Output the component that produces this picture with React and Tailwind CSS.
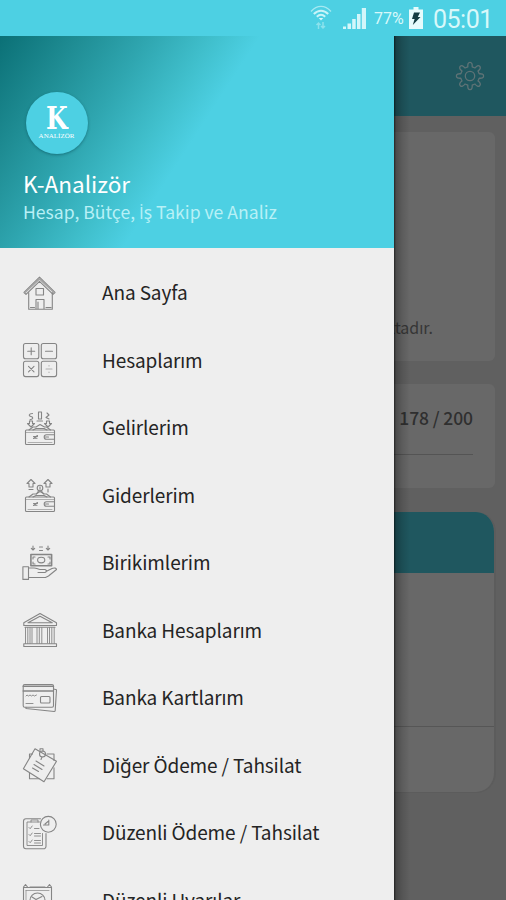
import React from "react";

const sans = "font-['Noto_Sans_CJK_SC','Source_Sans_Pro','Noto_Sans',sans-serif]";

function Icon({ children }) {
  return (
    <svg viewBox="0 0 40 40" className="h-10 w-10 shrink-0" fill="none" stroke="#858585" strokeWidth="1.1" strokeLinejoin="round" strokeLinecap="round">
      {children}
    </svg>
  );
}

const Wallet = () => (
  <>
    <rect x="5.5" y="22" width="29" height="14.5" rx="1" />
    <path d="M5.5 24.5h29M8 34.5h24" strokeWidth=".6" />
    <path d="M34.5 26.7h-8a2 2 0 0 0 0 4.6h8M25.5 29h3M13.5 30.5l4-3M13.5 28.5h4M14 30.2h3" />
    <path d="M9 22l4-3h3l4-2.5 4.500 2.500h2l4 3M13 22l3-1.500h8l3 1.500" />
  </>
);

const icons = {
  home: (
    <>
      <path d="M4 19.500L19.500 4.200 35 19.500l-2 1.800L19.500 8.300 6 21.300z" />
      <path d="M5 19.500L19.500 5.800 34 19.500" strokeWidth="1.600" stroke="#a5a5a5" />
      <path d="M8.700 19.500v16.700h23.600V19.500M16 36v-9.500h8V36M10.500 34.500h4M26 34.500h5M18 29v7" />
      <rect x="16" y="15.500" width="7.500" height="6.500" />
    </>
  ),
  calc: (
    <>
      <rect x="3.500" y="3.500" width="15.300" height="15.300" rx="2" />
      <rect x="21.300" y="3.500" width="15.300" height="15.300" rx="2" />
      <rect x="3.500" y="21.300" width="15.300" height="15.300" rx="2" />
      <rect x="21.300" y="21.300" width="15.300" height="15.300" rx="2" />
      <path d="M7.700 11.200h7M11.200 7.700v7M25.500 11.200h7M8.500 26.300l5.500 5.500M14 26.300l-5.500 5.500" />
      <path d="M26 29h6M29 25.500v.5M29 32v.5" stroke="#b0b0b0" />
    </>
  ),
  income: (
    <>
      <Wallet />
      <path d="M12.500 5.500c-4 0-4 2.500-1.500 3s2.500 3-1 3.200M21.500 4h-3v7h3V4M27 5l2 2-3 2.500 3 1.500M7.500 15.500l3.500 3.500 3.500-3.500h-2V13h-3v2.500zM24.500 15.500l3.500 3.500 3.500-3.500h-2V13h-3v2.500zM17 13h5.500" />
    </>
  ),
  expense: (
    <>
      <Wallet />
      <path d="M7 8.500l4-4 4 4h-2V12H9V8.500zM24 8.500l4-4 4 4h-2V12h-4V8.500zM9 14.500h4M28 14v3" />
      <circle cx="20" cy="13" r="2.800" />
      <path d="M20 11.700v2.600M18.500 16l-2 3M21.500 16l2 3" />
    </>
  ),
  saving: (
    <>
      <rect x="10.900" y="11.500" width="20.700" height="11.300" strokeWidth="1.600" />
      <ellipse cx="21.200" cy="17.100" rx="3.600" ry="2.800" />
      <path d="M13 16v-2h2M28 14h2v2M13 19v2h2M28 21h2v-2M13 3v4m-1.700-1.600L13 7l1.700-1.600M19.500 4h3M19.500 7.500h3M28 3v4m-1.700-1.600L28 7l1.700-1.600" />
      <path d="M2.900 23.800h5.600v12.600H2.900zM9 25h5c3 0 4 1.500 6 1.500h5c1.600 0 1.600 3 0 3h-7M26 28.500l6-3c2.500-1 4.500-.3 4.500 1l-8 6.500-3 1.500H9" />
    </>
  ),
  bank: (
    <>
      <path d="M3.800 12.800L20 3.500l16.500 9.300v2.700H3.800zM8 12.800l12-6.500 12.300 6.500zM5 17.200h30" />
      <path d="M5.500 17.500v16M7.800 17.500v16M10 17.500v16M17 17.500v16M19.300 17.500v16M21.800 17.500v16M29.500 17.500v16M31.800 17.500v16M34.200 17.500v16M12 18v15M27.500 18v15" strokeWidth=".9" />
      <path d="M3.800 33.800h32.700v2.700H3.800z" />
    </>
  ),
  cards: (
    <>
      <rect x="3.200" y="6.500" width="30.300" height="22.700" rx="1.500" />
      <path d="M3.200 8.300h30.300M3.200 13h30.300" strokeWidth="1.400" />
      <path d="M6 18l1-1 1.500 1 1.500-1 1.500 1 1.500-1 1.500 1 2-1M6 25.500h7" strokeWidth=".9" />
      <rect x="20.500" y="18.500" width="9.500" height="6.500" rx="1" />
      <path d="M33.500 11l3 .7-1.300 21a1 1 0 0 1-1 .8L6 30.500v-1.300" />
    </>
  ),
  note: (
    <>
      <path d="M15 3.800l21.500 12.500L24 36.700 3.400 23.700z" />
      <path d="M9.500 13V9h3M27 9h7v6.500M9.500 28v5.700H19M27 33.700h7v-11M34 24v8" />
      <path d="M16 16l8 5M14 19.500l8 5M12.500 23l6 3.500" />
      <circle cx="22.500" cy="9" r="3" />
      <path d="M20 5.500V3.800h3v2.700M22 12l-1 2.500" />
    </>
  ),
  planned: (
    <>
      <path d="M20.500 5.800H6a2.500 2.500 0 0 0-2.500 2.500v25A2.500 2.500 0 0 0 6 35.800h17.500a2.500 2.500 0 0 0 2.500-2.500V20.500" />
      <path d="M19.500 9H7v23.500h15.500v-12M11 9V7h7v2M9 14.500l1.200 1.200 2-2.700M9 21.500l1.200 1.200 2-2.700M9 28.500l1.200 1.200 2-2.700M14.500 15.500h4.500M14.500 20.500h6M14.500 23h6M14.500 27.500h6M14.500 30h6" strokeWidth=".9" />
      <circle cx="28.300" cy="11.300" r="7.900" />
      <path d="M28.800 7v5h-5.300M28 8.500l-3 2.500" />
    </>
  ),
  alerts: (
    <>
      <path d="M3.500 7.500h28v30h-28V7.500zM3.500 7l2-2.500 2 2.500M27.500 7l2-2.500 2 2.500M10 7h15" />
      <path d="M6 10.500h23M6 10.500v27" strokeWidth=".7" />
      <circle cx="17.500" cy="20.500" r="7.500" />
      <path d="M12 17l4 2.500 6-3" />
    </>
  ),
};

const menu = [
  ["home", "Ana Sayfa"],
  ["calc", "Hesaplarım"],
  ["income", "Gelirlerim"],
  ["expense", "Giderlerim"],
  ["saving", "Birikimlerim"],
  ["bank", "Banka Hesaplarım"],
  ["cards", "Banka Kartlarım"],
  ["note", "Diğer Ödeme / Tahsilat"],
  ["planned", "Düzenli Ödeme / Tahsilat"],
  ["alerts", "Düzenli Uyarılar"],
];

function StatusBar() {
  return (
    <div className="flex h-9 shrink-0 items-center justify-end bg-[#4dd0e3] pr-[13px] font-[Roboto,sans-serif] text-[#d8f8fa]">
      <svg viewBox="0 0 22 26" className="mr-[11px] h-[26px] w-[22px]" fill="none" stroke="#c9f4f8" strokeWidth="2">
        <path d="M1 6.500C7-.3 15-.3 21 6.500" strokeWidth="1.300" opacity=".7" />
        <path d="M3.800 9c4.500-4.500 10-4.500 14.400 0M6.800 11.700c2.800-2.500 5.600-2.500 8.400 0" />
        <path d="M8.700 13L11 15.500 13.300 13z" fill="#d8f8fa" stroke="none" />
        <path d="M8.500 24v-6M6.500 20l2-2 2 2M13 17v6m-2-2l2 2 2-2" strokeWidth="1.500" opacity=".5" />
      </svg>
      <svg viewBox="0 0 23 23" className="mr-2 h-[23px] w-[23px]" fill="#d3f6fa">
        <path d="M0 19.500h3V22H0zM4.500 16.500h3.500V22H4.500zM9.200 12h3.500v10H9.200zM14 7h3.500v15H14zM18.800 1H23v21h-4.200z" />
      </svg>
      <span className="mr-[4px] mt-[2px] w-[31px] whitespace-nowrap text-[16px] leading-5">77%</span>
      <svg viewBox="0 0 14 22" className="mr-[10px] h-[22px] w-[14px]">
        <path d="M4.500 0h5v2.500H14V22H0V2.500h4.500z" fill="#e6fbfc" />
        <path d="M5 5.500h6L8.800 10h2.700L3.800 18l1.800-6H3z" fill="#123c42" />
      </svg>
      <span className="mt-[3px] w-[60px] whitespace-nowrap text-[25px] leading-[30px] tracking-[-0.500px]">05:01</span>
    </div>
  );
}

function Gear() {
  return (
    <svg viewBox="0 0 30 30" className="h-[30px] w-[30px]" fill="none" stroke="#5f7376" strokeWidth="1.300" strokeLinejoin="round">
      <path d="M12.800 5.800C12.600 3 13.200 1.400 15 1.400s2.400 1.600 2.200 4.400l2.800 1.200c1.600-2.300 3.400-3 4.700-1.700s.6 3.100-1.700 4.700l1.200 2.800c2.800-.2 4.400.4 4.400 2.200s-1.600 2.400-4.400 2.200L23 20c2.300 1.600 3 3.400 1.700 4.700s-3.100.6-4.700-1.700l-2.800 1.200c.2 2.800-.4 4.400-2.200 4.400s-2.400-1.600-2.200-4.400L10 23c-1.600 2.300-3.400 3-4.700 1.700s-.6-3.100 1.700-4.700l-1.200-2.800C3 17.400 1.400 16.800 1.400 15s1.600-2.400 4.400-2.200L7 10C4.700 8.400 4 6.600 5.300 5.300s3.100-.6 4.700 1.700z" />
      <circle cx="15" cy="15" r="4.700" />
    </svg>
  );
}

function DimmedPage() {
  return (
    <div className="flex h-full flex-col bg-[#606060]">
      <header className="flex h-20 shrink-0 items-center justify-end bg-[#1f575f] pr-[21px]">
        <Gear />
      </header>
      <main className="flex flex-col pl-3 pr-[11px] pt-4">
        <section className="flex h-[229px] items-end justify-end rounded-md bg-[#686868] pb-[22px] pr-[62px]">
          <p className="text-[16px] leading-6 text-[#363636]">bulunmaktadır.</p>
        </section>
        <section className="mt-[23px] h-[104px] rounded-md bg-[#686868] px-[22px] pt-5">
          <p className="text-right text-[17.500px] font-medium leading-7 tracking-[-0.100px] text-[#2f2f2f]">178 / 200</p>
          <div className="mt-[22px] h-px bg-[#545454]" />
        </section>
        <section className="-mr-px mt-6 h-[281px] overflow-hidden rounded-[20px] border-b border-r-2 border-[#5c5c5c] bg-[#686868]">
          <div className="-mr-[2px] h-[61px] bg-[#1f575f]" />
          <div className="h-[154px] border-b border-[#565656]" />
        </section>
      </main>
    </div>
  );
}

function DrawerHeader() {
  return (
    <div className="flex h-[212px] shrink-0 flex-col bg-[linear-gradient(123deg,#0b7076_0%,#1f8d94_15%,#2fa6b0_28%,#40bfcc_40%,#4dd0e3_49%)] pl-[23px] pt-[56px]">
      <div className="ml-[2.500px] flex h-[62px] w-[62px] flex-col items-center rounded-full bg-[#4dd0e3] pt-[10px] text-white shadow-[0_1px_3px_rgba(0,60,70,0.45)]">
        <span className="inline-block scale-x-[0.780] font-['DejaVu_Serif',serif] text-[32px] font-bold leading-[32px]">K</span>
        <span className="-mt-px font-['Liberation_Serif',serif] text-[7px] leading-[7px]">ANALİZÖR</span>
      </div>
      <h1 className="mt-[13px] text-[22.500px] leading-8 text-white">K-Analizör</h1>
      <p className="text-[17.600px] leading-[26px] text-[#b8f0f6]">
        Hesap, Bütçe, <span className="font-['Open_Sans','Noto_Sans',sans-serif] text-[17px]">İ</span>ş Takip ve Analiz
      </p>
    </div>
  );
}

export default function App() {
  return (
    <div className={`flex h-[900px] w-[506px] flex-col overflow-hidden ${sans}`}>
      <StatusBar />
      <div className="relative h-[864px]">
        <DimmedPage />
        <div className="absolute inset-y-0 left-[394px] w-4 bg-[linear-gradient(90deg,rgba(0,0,0,0.65)_0,rgba(0,0,0,0.28)_2px,rgba(0,0,0,0.12)_8px,transparent_16px)]" />
        <aside className="absolute inset-y-0 left-0 flex w-[394px] flex-col overflow-hidden bg-[#eeeeee]">
          <DrawerHeader />
          <nav className="flex flex-col pt-[11px]">
            {menu.map(([icon, label]) => (
              <div key={icon} className="flex h-[67.500px] shrink-0 items-center gap-[42px] pl-5">
                <Icon>{icons[icon]}</Icon>
                <span className="-mt-px whitespace-nowrap text-[19px] leading-7 tracking-[-0.110px] text-[#242424]">{label}</span>
              </div>
            ))}
          </nav>
        </aside>
      </div>
    </div>
  );
}
